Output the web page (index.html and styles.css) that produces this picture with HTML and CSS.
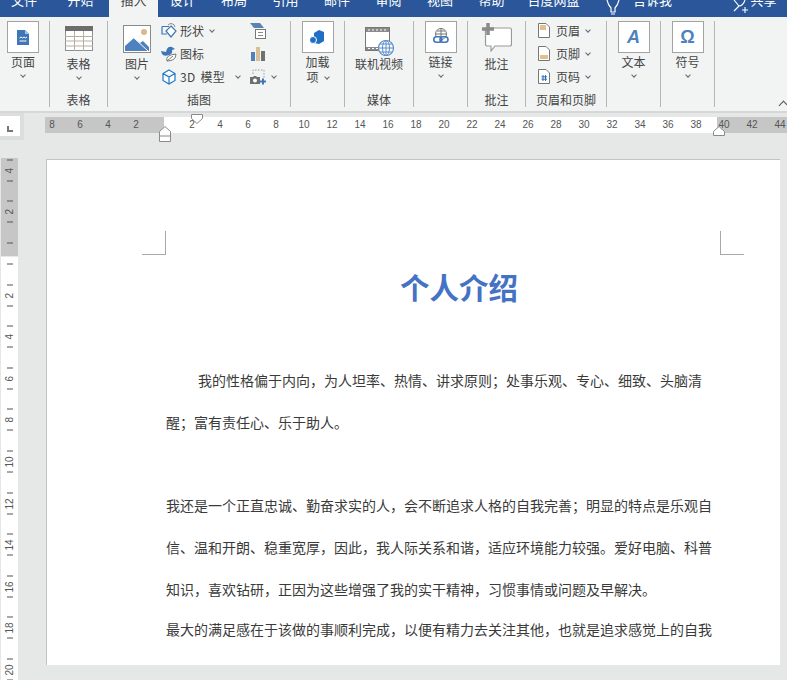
FILE: index.html
```html
<!DOCTYPE html>
<html lang="zh">
<head>
<meta charset="utf-8">
<title>个人介绍</title>
<link rel="stylesheet" href="styles.css">
</head>
<body>
<nav class="tabs">
  <span class="tab t0">文件</span>
  <span class="tab t1">开始</span>
  <span class="tab active">插入</span>
  <span class="tab t3">设计</span>
  <span class="tab">布局</span>
  <span class="tab">引用</span>
  <span class="tab">邮件</span>
  <span class="tab">审阅</span>
  <span class="tab">视图</span>
  <span class="tab">帮助</span>
  <span class="tab wide">百度网盘</span>
  <svg class="bulb" width="16" height="17" viewBox="0 0 16 17"><path d="M2 0 Q3 5 6 8 V12 H10 V8 Q13 5 14 0 M6 14 H10" fill="none" stroke="#fff" stroke-width="1.2"/></svg>
  <span class="tab tell">告诉我</span>
  <span class="share">
    <svg width="16" height="17" viewBox="0 0 16 17"><path d="M1 0 L6 6 Q10 6 12 0 M1 11 L6 6 M9 10 H15 M12 7 V13" fill="none" stroke="#fff" stroke-width="1.1"/></svg>
    <span>共享</span>
  </span>
</nav>

<section class="ribbon">
  <div class="group g-page">
    <div class="body pad-7">
      <div class="big">
        <div class="box"><svg width="12" height="15" viewBox="0 0 12 15"><path d="M0 0 H8 L12 4 V15 H0 Z" fill="#3f76b8"/><path d="M2.500 8 L4 7 L5.500 8 L7 7 L8.500 8 L10 7 M2.500 11 H9.500" fill="none" stroke="#fff"/><path d="M8 0 V4 H12 Z" fill="#a9c4e2"/></svg></div>
        <span class="lbl">页面</span><i class="chev"></i>
      </div>
    </div>
    <div class="glabel"></div>
  </div>
  <div class="group g-table">
    <div class="body center">
      <div class="big">
        <svg class="noicon" width="28" height="25" viewBox="0 0 28 25"><rect x=".5" y=".5" width="27" height="24" fill="#fff" stroke="#8f8f8f"/><rect width="28" height="5" fill="#6d6d6d"/><path d="M0 10.500 H28 M0 15 H28 M0 20 H28 M9.500 5 V25 M18.500 5 V25" stroke="#b8aea0"/></svg>
        <span class="lbl">表格</span><i class="chev"></i>
      </div>
    </div>
    <div class="glabel">表格</div>
  </div>
  <div class="group g-illus">
    <div class="body illus">
      <div class="big pic">
        <svg width="28" height="28" viewBox="0 0 28 28"><rect x=".5" y=".5" width="27" height="27" fill="#fff" stroke="#8a8a8a"/><circle cx="21" cy="7" r="3" fill="#d9b98a"/><path d="M2 26 V21 L11 13 L17 18 L20 16 L26 22 V26 Z" fill="#4d82bc"/><path d="M11 13 L25 26" stroke="#fff"/></svg>
        <span class="lbl">图片</span><i class="chev"></i>
      </div>
      <div class="rows">
        <div class="row">
          <svg class="ric" width="16" height="16" viewBox="0 0 16 16"><path d="M1 3.500 H8 M1 3.500 V11 H6" fill="none" stroke="#3f76b8" stroke-width="1.2"/><path d="M10 3 L15 8 L10 14 L5 8 Z" fill="#fff" stroke="#3f76b8" stroke-width="1.2"/><path d="M7 2 A4 4 0 0 1 14 4" fill="none" stroke="#888"/></svg>
          <span>形状</span><i class="chev"></i>
        </div>
        <div class="row">
          <svg class="ric" width="16" height="16" viewBox="0 0 16 16"><path d="M0 5 L5 6 Q6 0 11 1 L14 3 L11 4 Q12 8 8 9 Q3 11 1 8 Z" fill="#3f76b8"/><path d="M6 15 Q4 9 15 8 Q15 15 6 15 Z M6 15 L12 10" fill="#fff" stroke="#777"/></svg>
          <span>图标</span>
        </div>
        <div class="row">
          <svg class="ric" width="16" height="16" viewBox="0 0 16 16"><path d="M8 1 L14 4.500 V11.500 L8 15 L2 11.500 V4.500 Z M2 4.500 L8 8 L14 4.500 M8 8 V15" fill="#fff" stroke="#1f77c9" stroke-width="1.2"/></svg>
          <span class="d3">3D 模型</span><i class="chev far"></i>
        </div>
      </div>
      <div class="rows narrow">
        <div class="row">
          <svg width="16" height="16" viewBox="0 0 16 16"><path d="M0 0 H10 L14 5 H4 Z" fill="#5b83ad"/><rect x="5.500" y="6.500" width="10" height="9" fill="#fff" stroke="#777"/><path d="M8 9.500 H13 M8 12.500 H13" stroke="#888"/></svg>
        </div>
        <div class="row">
          <svg width="16" height="16" viewBox="0 0 16 16"><rect x="1" y="6" width="4" height="9" fill="#4d82bc"/><rect x="6" y="1" width="4" height="14" fill="#d9bf95"/><rect x="11" y="5" width="4" height="10" fill="#707070"/></svg>
        </div>
        <div class="row">
          <svg width="16" height="16" viewBox="0 0 16 16"><path d="M3 5 V1 H14 V9" fill="none" stroke="#999" stroke-dasharray="1.500 1.500"/><path d="M0 8 H3 L4 7 H6 L7 8 H10 V15 H0 Z" fill="#6f6f6f"/><circle cx="5" cy="11.500" r="2" fill="#fff"/><path d="M10 12.500 H16 M13 9.500 V15.500" stroke="#3f76b8" stroke-width="2"/></svg>
          <i class="chev"></i>
        </div>
      </div>
    </div>
    <div class="glabel">插图</div>
  </div>
  <div class="group g-addin">
    <div class="body center">
      <div class="big">
        <div class="box"><svg width="15" height="14" viewBox="0 0 15 14"><path d="M4 3 L9 0 L14 2 V11 L9 14 L4 13 Z" fill="#1f6fc5"/><circle cx="3" cy="10" r="3.500" fill="#1f6fc5" stroke="#fff"/></svg></div>
        <span class="lbl two">加载<br>项<i class="chev inline"></i></span>
      </div>
    </div>
    <div class="glabel"></div>
  </div>
  <div class="group g-media">
    <div class="body center">
      <div class="big">
        <svg class="noicon media" width="29" height="29" viewBox="0 0 29 29"><rect x=".5" y=".5" width="24" height="23" fill="#fff" stroke="#777"/><path d="M1 1 H24 V5 H1 Z M1 20 H24 V23 H1 Z" fill="#8a8a8a"/><path d="M3 3 H23 M3 21.500 H23" stroke="#fff" stroke-dasharray="2 2"/><circle cx="21" cy="21" r="7.500" fill="#fff" stroke="#5b8cc8" stroke-width="1.200"/><path d="M13.500 21 H28.500 M21 13.500 V28.500 M15 17 H27 M15 25 H27" stroke="#5b8cc8"/><ellipse cx="21" cy="21" rx="3.500" ry="7.500" fill="none" stroke="#5b8cc8"/></svg>
        <span class="lbl">联机视频</span>
      </div>
    </div>
    <div class="glabel">媒体</div>
  </div>
  <div class="group g-link">
    <div class="body center">
      <div class="big">
        <div class="box"><svg width="16" height="18" viewBox="0 0 16 18"><circle cx="8" cy="6" r="5.500" fill="#fff" stroke="#777"/><path d="M2.500 6 H13.500 M8 .5 V11 M4 3 H12" stroke="#777"/><rect x=".8" y="8.800" width="8" height="5.500" rx="2.700" fill="#fff" stroke="#3f76b8" stroke-width="1.600"/><rect x="7" y="8.800" width="8" height="5.500" rx="2.700" fill="none" stroke="#3f76b8" stroke-width="1.600"/></svg></div>
        <span class="lbl">链接</span><i class="chev"></i>
      </div>
    </div>
    <div class="glabel"></div>
  </div>
  <div class="group g-comment">
    <div class="body center">
      <div class="big">
        <svg class="noicon comment" width="30" height="29" viewBox="0 0 30 29"><path d="M5 5 H28 Q29.500 5 29.500 7 V21 Q29.500 23 28 23 H13 L9 28 V23 H5 Q3.500 23 3.500 21 V7" fill="#fff" stroke="#999" stroke-width="1.200"/><path d="M0 6 H12 M6 0 V12" stroke="#8a8a8a" stroke-width="3.500"/></svg>
        <span class="lbl">批注</span>
      </div>
    </div>
    <div class="glabel">批注</div>
  </div>
  <div class="group g-head">
    <div class="body hf">
      <div class="row">
        <svg class="hic" width="12" height="15" viewBox="0 0 12 15"><path d="M.5 .5 H8 L11.500 4 V14.500 H.5 Z" fill="#fff" stroke="#777"/><rect x="2" y="2" width="6" height="5" fill="#e0c08f"/></svg>
        <span>页眉</span><i class="chev"></i>
      </div>
      <div class="row">
        <svg class="hic" width="12" height="15" viewBox="0 0 12 15"><path d="M.5 .5 H8 L11.500 4 V14.500 H.5 Z" fill="#fff" stroke="#777"/><rect x="2" y="9" width="8" height="4" fill="#e0c08f"/></svg>
        <span>页脚</span><i class="chev"></i>
      </div>
      <div class="row">
        <svg class="hic" width="12" height="15" viewBox="0 0 12 15"><path d="M.5 .5 H8 L11.500 4 V14.500 H.5 Z" fill="#fff" stroke="#777"/><path d="M5 6 V12 M7.500 6 V12 M3.500 7.800 H9 M3.500 10.200 H9" stroke="#2f6fb8"/></svg>
        <span>页码</span><i class="chev"></i>
      </div>
    </div>
    <div class="glabel">页眉和页脚</div>
  </div>
  <div class="group g-text">
    <div class="body center">
      <div class="big">
        <div class="box"><span class="glyph ital">A</span></div>
        <span class="lbl">文本</span><i class="chev"></i>
      </div>
    </div>
    <div class="glabel"></div>
  </div>
  <div class="group g-symbol">
    <div class="body center">
      <div class="big">
        <div class="box"><span class="glyph">Ω</span></div>
        <span class="lbl">符号</span><i class="chev"></i>
      </div>
    </div>
    <div class="glabel"></div>
  </div>
  <i class="collapse"></i>
</section>

<section class="rulerzone">
  <div class="selector"><svg width="6" height="6" viewBox="0 0 6 6"><path d="M0 0 H2 V4 H6 V6 H0 Z" fill="#777"/></svg></div>
  <div class="hruler">
    <div class="nums">
      <span>8</span><span>6</span><span>4</span><span>2</span><span></span>
      <span>2</span><span>4</span><span>6</span><span>8</span><span>10</span><span>12</span><span>14</span><span>16</span><span>18</span><span>20</span><span>22</span><span>24</span><span>26</span><span>28</span><span>30</span><span>32</span><span>34</span><span>36</span><span>38</span><span>40</span><span>42</span><span>44</span>
    </div>
  </div>
  <svg class="marker first" width="12" height="10" viewBox="0 0 12 10"><path d="M.5 .5 H11.500 V4.500 L6 9.500 L.5 4.500 Z" fill="#fff" stroke="#8a8a8a"/></svg>
  <svg class="marker left" width="12" height="16" viewBox="0 0 12 16"><path d="M.5 5.500 L6 .5 L11.500 5.500 V15.500 H.5 Z M.5 10 H11.500" fill="#fff" stroke="#8a8a8a"/></svg>
  <svg class="marker right" width="12" height="10" viewBox="0 0 12 10"><path d="M.5 5.500 L6 .5 L11.500 5.500 V9.500 H.5 Z" fill="#fff" stroke="#8a8a8a"/></svg>
</section>

<main class="workspace">
  <aside class="vruler">
    <div class="cell"><b>4</b></div>
    <div class="cell"><b>2</b></div>
    <div class="cell"><b></b></div>
    <div class="cell"><b>2</b></div>
    <div class="cell"><b>4</b></div>
    <div class="cell"><b>6</b></div>
    <div class="cell"><b>8</b></div>
    <div class="cell"><b>10</b></div>
    <div class="cell"><b>12</b></div>
    <div class="cell"><b>14</b></div>
    <div class="cell"><b>16</b></div>
    <div class="cell"><b>18</b></div>
    <div class="cell"><b>20</b></div>
  </aside>
  <article class="page">
    <i class="crop crop-l"></i>
    <i class="crop crop-r"></i>
    <h1>个人介绍</h1>
    <p class="para p1">
      <span class="line ind">我的性格偏于内向，为人坦率、热情、讲求原则；处事乐观、专心、细致、头脑清</span>
      <span class="line">醒；富有责任心、乐于助人。</span>
    </p>
    <p class="para p2">
      <span class="line">我还是一个正直忠诚、勤奋求实的人，会不断追求人格的自我完善；明显的特点是乐观自</span>
      <span class="line">信、温和开朗、稳重宽厚，因此，我人际关系和谐，适应环境能力较强。爱好电脑、科普</span>
      <span class="line">知识，喜欢钻研，正因为这些增强了我的实干精神，习惯事情或问题及早解决。</span>
    </p>
    <p class="para p3">
      <span class="line">最大的满足感在于该做的事顺利完成，以便有精力去关注其他，也就是追求感觉上的自我</span>
    </p>
  </article>
</main>
</body>
</html>
```

FILE: styles.css
```css
* { box-sizing: border-box; }
html, body { margin: 0; height: 680px; overflow: hidden; }
body {
  background: #e6e7e7;
  font-family: "Noto Sans CJK SC", "Liberation Sans", sans-serif;
  font-size: 12px;
  color: #444;
}
i { display: block; font-style: normal; }

/* tabs */
.tabs {
  display: flex;
  height: 17px;
  background: #2b579a;
  color: #fff;
  font-size: 13px;
  overflow: hidden;
}
.tab {
  display: block;
  flex: none;
  width: 49px;
  height: 17px;
  margin-left: 2.5px;
  line-height: 0;
  text-align: center;
}
.tab.t0 { margin-left: 0; width: 48px; }
.tab.t1 { margin-left: 8px; }
.tab.active { margin-left: 4px; background: #f2f4f4; color: #444; }
.tab.t3 { margin-left: 0; }
.tab.wide { width: 70px; }
.bulb { flex: none; margin-left: 16px; }
.tab.tell { margin-left: 12px; width: 40px; }
.share { display: flex; margin-left: 60px; line-height: 0; gap: 2px; align-items: flex-start; }
.share span { display: block; }

/* ribbon */
.ribbon {
  position: relative;
  display: flex;
  height: 96px;
  padding-top: 4px;
  background: #f2f4f4;
  border-bottom: 2px solid #d6d8d8;
}
.group {
  flex: none;
  display: flex;
  flex-direction: column;
  height: 86px;
  border-right: 1px solid #b4b6b6;
}
.g-page { width: 50px; }
.g-table { width: 58px; }
.g-illus { width: 183px; }
.g-addin { width: 54px; }
.g-media { width: 69px; }
.g-link { width: 54px; }
.g-comment { width: 58px; }
.g-head { width: 81px; }
.g-text { width: 54px; }
.g-symbol { width: 54px; }
.body { flex: 1; display: flex; min-height: 0; }
.center { justify-content: center; }
.pad-7 { padding-left: 7px; }
.glabel { height: 14px; line-height: 14px; text-align: center; white-space: nowrap; }
.big { display: flex; flex-direction: column; align-items: center; }
.box {
  width: 32px;
  height: 32px;
  background: #fff;
  border: 1px solid #a3a3a3;
  display: flex;
  align-items: center;
  justify-content: center;
}
.lbl { display: block; line-height: 16px; margin-top: 1px; white-space: nowrap; text-align: center; }
.noicon { margin: 5px 0; flex: none; }
.noicon ~ .lbl { margin-top: 0; }
.noicon.media { margin: 6px 0 0 2px; }
.noicon.comment { margin: 2px 0 4px; }
.chev {
  width: 4px;
  height: 4px;
  margin-top: 3px;
  border-right: 1px solid #666;
  border-bottom: 1px solid #666;
  transform: rotate(45deg);
}
.chev.inline { display: inline-block; margin: 0 0 3px 6px; }
.two { line-height: 15px; }

.illus { padding-left: 15px; }
.pic { width: 28px; padding-top: 4px; }
.pic .lbl { margin-top: 3px; }
.rows { display: flex; flex-direction: column; margin-top: -2px; margin-left: 10px; width: 89px; }
.rows.narrow { width: 36px; margin-left: 0; }
.row { display: flex; align-items: center; height: 23px; white-space: nowrap; flex: none; }
.row .chev { margin: -2px 0 0 6px; }
.row .chev.far { margin-left: 11px; }
.ric { margin-right: 3px; flex: none; }
.d3 { word-spacing: 2px; letter-spacing: .3px; }

.hf { flex-direction: column; padding-left: 12px; margin-top: -2px; }
.hic { margin-right: 6px; flex: none; }

.glyph { font-family: "Liberation Sans", sans-serif; font-size: 18px; font-weight: bold; color: #4d82bc; line-height: 1; }
.glyph.ital { font-style: italic; }

.collapse {
  position: absolute;
  right: 0;
  top: 85px;
  width: 7px;
  height: 7px;
  border-left: 1px solid #555;
  border-top: 1px solid #555;
  transform: rotate(45deg);
}

/* horizontal ruler */
.rulerzone { position: relative; display: flex; height: 45px; padding-top: 4px; }
.selector {
  flex: none;
  width: 24px;
  height: 27px;
  margin-top: -4px;
  background: #fff;
  border: solid #dcdddd;
  border-width: 3px 4px 4px 0;
  display: flex;
  align-items: center;
  justify-content: center;
  padding-top: 6px;
}
.hruler {
  flex: none;
  width: 742px;
  height: 16px;
  margin-left: 21px;
  overflow: hidden;
  background: linear-gradient(to right, #c6c6c6 119px, #fff 119px 672px, #c6c6c6 672px);
}
.nums { display: flex; margin-left: -7px; font-family: "Liberation Sans", sans-serif; font-size: 10px; line-height: 16px; color: #555; }
.nums span { flex: none; width: 28px; text-align: center; }
.marker { position: absolute; display: block; }
.marker.first { left: 191px; top: 1px; }
.marker.left { left: 159px; top: 13px; }
.marker.right { left: 713px; top: 13px; }

/* workspace */
.workspace { display: flex; height: 522px; align-items: flex-start; }
.vruler {
  flex: none;
  width: 17px;
  height: 522px;
  margin-left: 1px;
  padding-top: 0;
  overflow: hidden;
  background: linear-gradient(to bottom, #c6c6c6 98px, #e6e7e7 98px 99px, #fff 99px);
}
.cell {
  height: 41.6px;
  display: flex;
  flex-direction: column;
  align-items: center;
  justify-content: center;
  transform: translateY(-8.5px);
}
.cell::before, .cell::after { content: ""; display: block; width: 6px; height: 1px; background: #555; }
.cell b {
  display: flex;
  align-items: center;
  justify-content: center;
  height: 20px;
  writing-mode: vertical-rl;
  transform: rotate(180deg);
  font: normal 10px/10px "Liberation Sans", sans-serif;
  color: #555;
}

/* page */
.page {
  flex: none;
  position: relative;
  width: 734px;
  height: 506px;
  margin: 1px 0 0 28px;
  padding: 106px 0 0 119px;
  background: #fff;
  border-left: 1px solid #c3c3c3;
  border-top: 1px solid #c3c3c3;
  color: #3a3a3a;
  overflow: hidden;
}
h1 {
  margin: 0;
  width: 586px;
  height: 40px;
  text-align: center;
  font-size: 29.5px;
  line-height: 40px;
  font-weight: 700;
  color: #4472c4;
}
.para { margin: 0; font-size: 14px; line-height: 42px; }
.p1 { margin-top: 53px; }
.p2 { margin-top: 41px; }
.p3 { margin-top: -2px; }
.line { display: block; white-space: nowrap; }
.ind { text-indent: 32px; }
.crop { position: absolute; top: 71px; width: 24px; height: 24px; border-bottom: 1px solid #a8a8a8; }
.crop-l { left: 95px; border-right: 1px solid #a8a8a8; }
.crop-r { left: 673px; border-left: 1px solid #a8a8a8; }
```
